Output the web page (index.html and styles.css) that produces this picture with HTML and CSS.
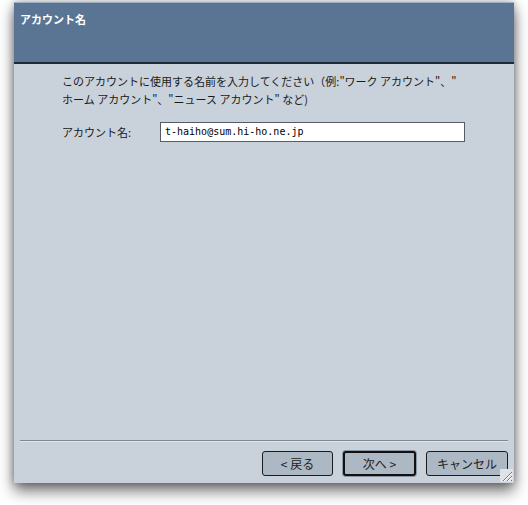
FILE: index.html
```html
<!DOCTYPE html>
<html lang="ja">
<head>
<meta charset="utf-8">
<link rel="stylesheet" href="styles.css">
</head>
<body>
<div class="window">
  <div class="header">
    <div class="title">アカウント名</div>
  </div>
  <div class="content">
    <p class="desc">このアカウントに使用する名前を入力してください（例:"ワーク アカウント"、"<br>ホーム アカウント"、"ニュース アカウント" など)</p>
    <div class="row">
      <label class="label">アカウント名:</label>
      <div class="input">t-haiho@sum.hi-ho.ne.jp</div>
    </div>
  </div>
  <div class="footer">
    <div class="sep"></div>
    <div class="buttons">
      <div class="btn">&lt; 戻る</div>
      <div class="btn default">次へ &gt;</div>
      <div class="btn">キャンセル</div>
    </div>
    <div class="grip">
      <svg width="13" height="13" viewBox="0 0 13 13">
        <rect width="13" height="13" fill="#dfe3e8"/>
        <path d="M12 3 L3 12 M12 7 L7 12 M12 11 L11 12" stroke="#6f7780" stroke-width="1"/>
        <path d="M12 4 L4 12 M12 8 L8 12" stroke="#ffffff" stroke-width="1"/>
      </svg>
    </div>
  </div>
</div>
</body>
</html>
```
FILE: styles.css
```css
html, body {
  margin: 0;
  padding: 0;
  background: #ffffff;
}
body {
  font-family: "Noto Sans CJK JP", "Noto Sans", sans-serif;
  font-size: 11px;
  color: #1a1a1a;
  min-height: 505px;
  padding-top: 2px;
  box-sizing: border-box;
}
.window {
  margin: 0 0 0 14px;
  width: 500px;
  height: 481px;
  background: #c9d1db;
  display: flex;
  flex-direction: column;
  box-shadow: 0 8px 14px rgba(0,0,0,0.55), 0 0 8px rgba(0,0,0,0.3);
  position: relative;
}
.header {
  background: #5a7593;
  border-top: 1px solid #9fb0c4;
  border-bottom: 2px solid #1e2a38;
  padding: 9px 0 0 6px;
  height: 50px;
}
.title {
  color: #ffffff;
  font-weight: bold;
  font-size: 11px;
  line-height: 14px;
}
.content {
  flex: 1;
  padding: 8px 0 0 48px;
}
.desc {
  margin: 0;
  line-height: 18px;
  width: 420px;
}
.row {
  display: flex;
  align-items: center;
  margin-top: 14px;
}
.label {
  width: 98px;
}
.input {
  width: 299px;
  height: 18px;
  background: #ffffff;
  border: 1px solid #555c66;
  font-family: "DejaVu Sans Mono", monospace;
  font-size: 10px;
  line-height: 18px;
  padding-left: 4px;
  color: #000;
}
.footer {
  height: 43px;
  position: relative;
}
.sep {
  margin: 0 6px 0 6px;
  height: 0;
  border-top: 1px solid #7c8694;
  border-bottom: 1px solid #e3e7ec;
}
.buttons {
  display: flex;
  justify-content: flex-end;
  gap: 10px;
  padding: 9px 6px 0 0;
}
.btn {
  height: 25px;
  line-height: 23px;
  border: 1px solid #1b1b1b;
  border-radius: 3px;
  background: #adb8c5;
  text-align: center;
  font-size: 12px;
  color: #222;
  box-sizing: border-box;
}
.btn:nth-child(1) { width: 71px; }
.btn:nth-child(2) { width: 73px; border: 2px solid #111; line-height: 21px; box-shadow: 0 0 0 1px #8a96a6; }
.btn:nth-child(3) { width: 82px; }
.grip {
  position: absolute;
  right: 1px;
  bottom: 1px;
  width: 13px;
  height: 13px;
}
.grip svg { display: block; }
```
